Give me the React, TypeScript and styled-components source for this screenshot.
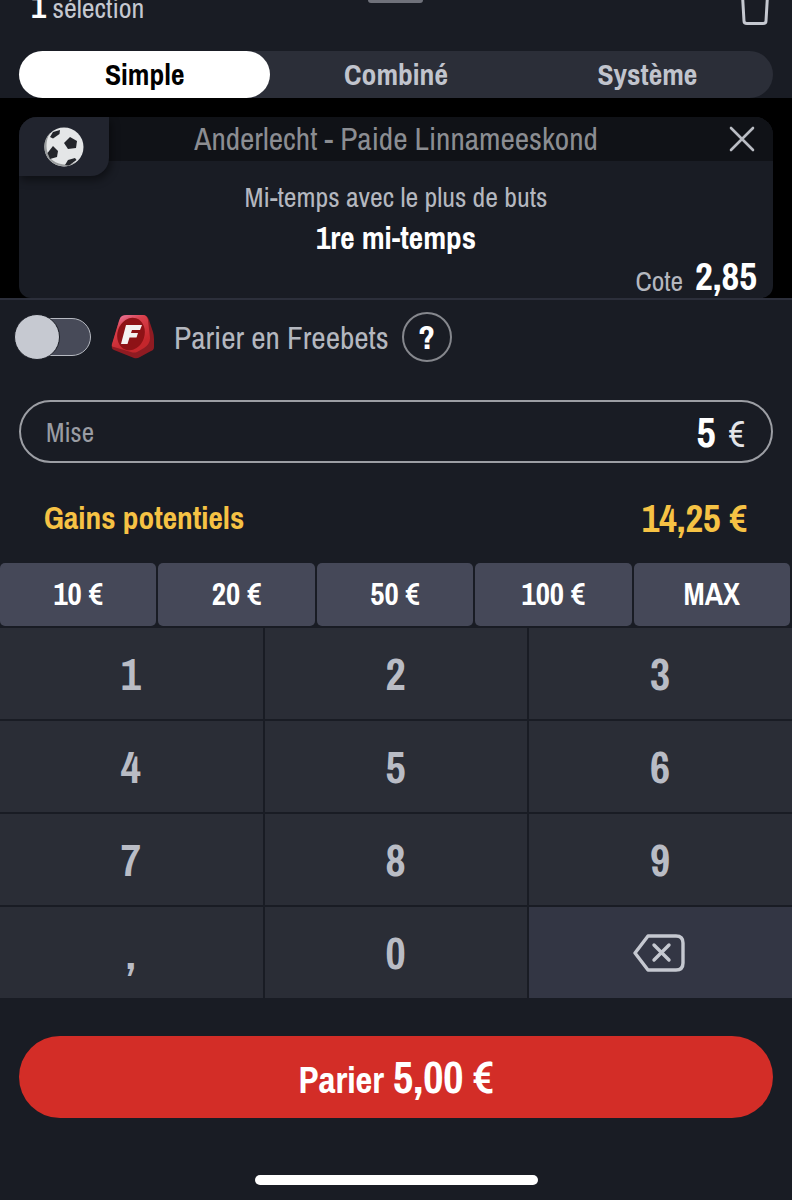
import React from 'react';
import styled, { createGlobalStyle } from 'styled-components';

const GlobalStyle = createGlobalStyle`
  html, body {
    margin: 0;
    padding: 0;
    background: #191c24;
  }
  * {
    box-sizing: border-box;
  }
`;

const QUICK_STAKES = ['10 €', '20 €', '50 €', '100 €', 'MAX'];
const KEYS = ['1', '2', '3', '4', '5', '6', '7', '8', '9', ',', '0'];

const SoccerBall = () => (
  <svg width="40" height="40" viewBox="0 0 40 40">
    <circle cx="20" cy="20" r="19.5" fill="#e4e6e7" />
    <path d="M6 6 A19.5 19.5 0 0 0 32 35 A22 22 0 0 1 6 31 A24 24 0 0 1 6 6 Z" fill="#9a9d9e" />
    <path d="M6 10 L9 5 L16 3 L15.5 7 L9 11.5 Z" fill="#23252a" />
    <path d="M26 10 L33 14 L32 21 L24 22 L20 16 Z" fill="#23252a" />
    <path d="M9 19 L14 24 L13 30 L6 32 L3.5 26 Z" fill="#23252a" />
    <path d="M24 33 L31 31 L32.5 33 L25 38.5 L21 38 Z" fill="#23252a" />
  </svg>
);

const FreebetLogo = () => (
  <svg width="44" height="46" viewBox="0 0 44 46">
    <defs>
      <linearGradient id="freebetFace" x1="0.2" y1="0" x2="0.6" y2="0.8">
        <stop offset="0" stopColor="#ea7aa0" />
        <stop offset="0.35" stopColor="#d9404c" />
        <stop offset="1" stopColor="#c4262c" />
      </linearGradient>
    </defs>
    <path d="M11 2 Q13 1 16 1 L32 1 Q36 1 38 6 L42 18 Q43 21 43 25 L43 33 Q43 36 40 37 L29 43 Q26 45 23 44 L3 36 Q0 35 1 31 L8 7 Q9 3 11 2 Z" fill="#8f1b22" />
    <path d="M11 2 Q13 1 16 1 L32 1 Q36 1 37 6 L39 24 Q39 30 33 34 L26 38 Q23 39 20 38 L3 33 Q0 33 1 30 L8 7 Q9 3 11 2 Z" fill="url(#freebetFace)" />
    <ellipse cx="20" cy="20" rx="13.5" ry="16.5" transform="rotate(18 20 20)" fill="#8e1216" />
    <path d="M15 11 L31 11 L29 16 L21 16 L20 19 L27 19 L25.5 23.5 L18.5 23.5 L16.5 30 L10 30 Z" fill="#f4f1f1" />
  </svg>
);

const BackspaceIcon = () => (
  <svg width="52" height="38" viewBox="0 0 52 38" fill="none" stroke="#c5c8d0" strokeWidth="3.4" strokeLinecap="round" strokeLinejoin="round">
    <path d="M15 2 H43 Q50 2 50 9 V29 Q50 36 43 36 H15 L2 19 Z" />
    <path d="M21 11 L36 26 M36 11 L21 26" />
  </svg>
);

const TrashIcon = () => (
  <svg width="30" height="40" viewBox="0 0 30 40" fill="none" stroke="#c5c8d0" strokeWidth="3" strokeLinecap="round" strokeLinejoin="round">
    <path d="M2 2 L4 36 Q4 38.5 7 38.5 H23 Q26 38.5 26 36 L28 2" />
  </svg>
);

const App = (): JSX.Element => {
  return (
    <Page>
      <GlobalStyle />
      <Header>
        <SelectionCount>
          <b>1</b> sélection
        </SelectionCount>
        <Handle />
        <TrashSlot>
          <TrashIcon />
        </TrashSlot>
      </Header>
      <Tabs>
        <Tab $active>Simple</Tab>
        <Tab>Combiné</Tab>
        <Tab>Système</Tab>
      </Tabs>
      <BetArea>
        <BetCard>
          <BetHead>
            <SportBadge>
              <SoccerBall />
            </SportBadge>
            <MatchName>Anderlecht - Paide Linnameeskond</MatchName>
            <CloseButton>
              <svg width="26" height="26" viewBox="0 0 26 26" stroke="#b9bcc3" strokeWidth="2.6" strokeLinecap="round">
                <path d="M2 2 L24 24 M24 2 L2 24" />
              </svg>
            </CloseButton>
          </BetHead>
          <MarketName>Mi-temps avec le plus de buts</MarketName>
          <Outcome>1re mi-temps</Outcome>
          <OddsRow>
            <OddsLabel>Cote</OddsLabel>
            <OddsValue>2,85</OddsValue>
          </OddsRow>
        </BetCard>
      </BetArea>
      <FreebetRow>
        <Toggle>
          <ToggleKnob />
        </Toggle>
        <FreebetLogo />
        <FreebetLabel>Parier en Freebets</FreebetLabel>
        <HelpButton>?</HelpButton>
      </FreebetRow>
      <StakeField>
        <StakeLabel>Mise</StakeLabel>
        <StakeValue>
          <b>5</b>€
        </StakeValue>
      </StakeField>
      <GainsRow>
        <GainsLabel>Gains potentiels</GainsLabel>
        <GainsValue>14,25 €</GainsValue>
      </GainsRow>
      <QuickStakes>
        {QUICK_STAKES.map((stake) => (
          <QuickStake key={stake}>{stake}</QuickStake>
        ))}
      </QuickStakes>
      <Keypad>
        {KEYS.map((key) => (
          <Key key={key}>{key}</Key>
        ))}
        <BackspaceKey>
          <BackspaceIcon />
        </BackspaceKey>
      </Keypad>
      <Footer>
        <SubmitButton>
          Parier <SubmitAmount>5,00 €</SubmitAmount>
        </SubmitButton>
      </Footer>
      <HomeIndicator />
    </Page>
  );
};

const Page = styled.div`
  position: relative;
  width: 792px;
  height: 1200px;
  overflow: hidden;
  background: #191c24;
  color: #fff;
  font-family: 'Archivo Narrow', 'Roboto Condensed', Roboto, sans-serif;
`;

const Header = styled.div`
  position: relative;
  display: flex;
  justify-content: space-between;
  align-items: flex-end;
  height: 51px;
  padding: 0 22px 30px 31px;
  overflow: hidden;
`;

const SelectionCount = styled.div`
  font-size: 28px;
  line-height: 26px;
  color: #c5c8d0;
  b {
    font-size: 33px;
    color: #fff;
  }
`;

const Handle = styled.div`
  position: absolute;
  top: 0;
  left: 368px;
  width: 55px;
  height: 3px;
  border-radius: 0 0 3px 3px;
  background: #6f717a;
`;

const TrashSlot = styled.div`
  display: flex;
  margin-bottom: -4px;
`;

const Tabs = styled.div`
  display: grid;
  grid-template-columns: repeat(3, 1fr);
  height: 47px;
  margin: 0 19px;
  border-radius: 24px;
  background: #2b2e38;
`;

const Tab = styled.div<{ $active?: boolean }>`
  display: flex;
  align-items: center;
  justify-content: center;
  padding-bottom: 1px;
  border-radius: 24px;
  font-size: 29.6px;
  font-weight: 700;
  color: ${(p) => (p.$active ? '#000' : '#c1c4cd')};
  background: ${(p) => (p.$active ? '#fff' : 'transparent')};
`;

const BetArea = styled.div`
  height: 200px;
  padding: 19px 19px 0;
  background: #000;
`;

const BetCard = styled.div`
  height: 181px;
  border-radius: 18px 18px 12px 12px;
  background: #191c24;
  overflow: hidden;
`;

const BetHead = styled.div`
  position: relative;
  display: flex;
  align-items: center;
  justify-content: center;
  height: 44px;
  background: #101217;
`;

const SportBadge = styled.div`
  position: absolute;
  top: 0;
  left: 0;
  display: flex;
  align-items: center;
  justify-content: center;
  width: 90px;
  height: 59px;
  padding-top: 1px;
  border-radius: 0 0 18px 0;
  background: #21242e;
  box-shadow: 2px 4px 8px rgba(0, 0, 0, 0.45);
`;

const MatchName = styled.div`
  font-size: 31.4px;
  color: #8b8d92;
`;

const CloseButton = styled.div`
  position: absolute;
  top: 9px;
  right: 18px;
  display: flex;
`;

const MarketName = styled.div`
  margin-top: 19px;
  font-size: 27.8px;
  line-height: 34px;
  text-align: center;
  color: #b4b7bf;
`;

const Outcome = styled.div`
  margin-top: 6px;
  font-size: 31.4px;
  line-height: 36px;
  font-weight: 700;
  text-align: center;
  color: #fff;
`;

const OddsRow = styled.div`
  display: flex;
  align-items: flex-end;
  justify-content: flex-end;
  gap: 12px;
  height: 38px;
  margin-top: 1px;
  padding-right: 16px;
`;

const OddsLabel = styled.span`
  font-size: 27.5px;
  line-height: 26px;
  color: #b4b7bf;
`;

const OddsValue = styled.span`
  font-size: 38.8px;
  line-height: 38px;
  font-weight: 700;
  color: #fff;
`;

const FreebetRow = styled.div`
  display: flex;
  align-items: center;
  height: 80px;
  padding: 0 0 4px 15px;
  border-top: 2px solid #2c2f3b;
`;

const Toggle = styled.div`
  position: relative;
  width: 76px;
  height: 38px;
  margin-right: 20px;
  border: 1.5px solid #b6b9c1;
  border-radius: 19px;
  background: #474a58;
`;

const ToggleKnob = styled.div`
  position: absolute;
  top: -5px;
  left: -2.5px;
  width: 46px;
  height: 46px;
  border-radius: 50%;
  border: 1px solid #191c24;
  background: #c6c9d1;
`;

const FreebetLabel = styled.div`
  margin-left: 19px;
  padding-top: 2px;
  font-size: 31.4px;
  color: #b4b7bf;
`;

const HelpButton = styled.div`
  display: flex;
  align-items: center;
  justify-content: center;
  width: 50px;
  height: 50px;
  margin-left: 13px;
  border: 2px solid #85878d;
  border-radius: 50%;
  font-size: 34px;
  font-weight: 700;
`;

const StakeField = styled.div`
  display: flex;
  align-items: center;
  justify-content: space-between;
  height: 63px;
  margin: 22px 19px 0;
  padding: 0 26px 0 25px;
  border: 2px solid #9c9ea4;
  border-radius: 32px;
`;

const StakeLabel = styled.div`
  font-size: 27px;
  color: #9a9ca3;
`;

const StakeValue = styled.div`
  display: flex;
  align-items: baseline;
  gap: 13px;
  font-size: 36px;
  color: #e3e4e8;
  b {
    font-size: 42px;
    color: #fff;
  }
`;

const GainsRow = styled.div`
  display: flex;
  align-items: center;
  justify-content: space-between;
  height: 100px;
  padding: 10px 45px 0 44px;
  color: #f6c244;
  font-weight: 700;
`;

const GainsLabel = styled.div`
  font-size: 31.4px;
`;

const GainsValue = styled.div`
  font-size: 38.5px;
`;

const QuickStakes = styled.div`
  display: grid;
  grid-template-columns: repeat(5, 1fr);
  gap: 2px;
  width: 790px;
  height: 63px;
`;

const QuickStake = styled.div`
  display: flex;
  align-items: center;
  justify-content: center;
  padding-bottom: 2px;
  border-radius: 5px;
  background: #454858;
  font-size: 31px;
  font-weight: 700;
`;

const Keypad = styled.div`
  display: grid;
  grid-template-columns: repeat(3, 1fr);
  grid-auto-rows: 91px;
  gap: 2px;
  margin-top: 2px;
`;

const Key = styled.div`
  display: flex;
  align-items: center;
  justify-content: center;
  padding-right: 1px;
  background: #2a2d36;
  font-size: 44px;
  font-weight: 700;
  color: #b9bcc5;
`;

const BackspaceKey = styled(Key)`
  padding-right: 4px;
  background: #333644;
`;

const Footer = styled.div`
  padding: 38px 19px 0;
`;

const SubmitButton = styled.div`
  display: flex;
  align-items: baseline;
  justify-content: center;
  gap: 9px;
  height: 82px;
  line-height: 82px;
  border-radius: 41px;
  background: #d32d27;
  font-size: 36.8px;
  font-weight: 700;
`;

const SubmitAmount = styled.span`
  font-size: 44px;
`;

const HomeIndicator = styled.div`
  position: absolute;
  left: 255px;
  bottom: 15px;
  width: 283px;
  height: 10px;
  border-radius: 5px;
  background: #fff;
`;

export default App;
